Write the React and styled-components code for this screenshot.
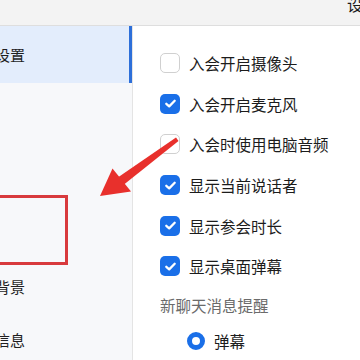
import React from 'react';
import styled, { createGlobalStyle } from 'styled-components';

const GlobalStyle = createGlobalStyle`
  html, body {
    margin: 0;
    padding: 0;
    background: #ffffff;
    overflow: hidden;
  }
  body {
    font-family: "Noto Sans CJK SC", "Noto Sans", sans-serif;
  }
`;

const Window = styled.div`
  position: relative;
  width: 360px;
  height: 360px;
  overflow: hidden;
  display: flex;
  flex-direction: column;
  background: #fff;
`;

const TitleBar = styled.div`
  height: 25px;
  flex: none;
  display: flex;
  justify-content: flex-end;
  align-items: flex-start;
  background: #f3f3f3;
  border-bottom: 1px solid #dedede;
`;

const Title = styled.span`
  margin-top: -6px;
  margin-right: -19px;
  font-size: 16px;
  line-height: 20px;
  color: #1a1a1a;
  white-space: nowrap;
`;

const Body = styled.div`
  flex: 1;
  display: flex;
  min-height: 0;
`;

const Sidebar = styled.div`
  width: 132px;
  flex: none;
  display: flex;
  flex-direction: column;
  background: #f7f8fa;
  border-right: 1px solid #e4e4e4;
`;

const NavItem = styled.div`
  height: ${p => p.$h || 53}px;
  flex: none;
  display: flex;
  align-items: center;
  background: ${p => (p.$active ? '#e3edfc' : 'transparent')};
  box-shadow: ${p => (p.$active ? 'inset -3px 0 0 #2d6fd9' : 'none')};
  overflow: hidden;
`;

const NavLabel = styled.span`
  margin-left: -35px;
  font-size: 15px;
  color: #1f1f1f;
  white-space: nowrap;
`;

const Spacer = styled.div`
  height: ${p => p.$h}px;
  flex: none;
`;

const Content = styled.div`
  flex: 1;
  display: flex;
  flex-direction: column;
  padding: 17px 0 0 27px;
`;

const Row = styled.label`
  height: 40.6px;
  flex: none;
  display: flex;
  align-items: center;
  gap: 9px;
  font-size: 15.5px;
  color: #1c1c1c;
  white-space: nowrap;
`;

const Box = styled.span`
  width: 20px;
  height: 20px;
  box-sizing: border-box;
  border-radius: 5px;
  flex: none;
  display: flex;
  align-items: center;
  justify-content: center;
  background: ${p => (p.$checked ? '#1a6fe8' : '#fff')};
  border: ${p => (p.$checked ? 'none' : '1.5px solid #d0d0d0')};
`;

const SectionLabel = styled.div`
  margin-top: 6px;
  height: 24px;
  line-height: 24px;
  font-size: 15.5px;
  color: #6b6b6b;
  white-space: nowrap;
`;

const RadioRow = styled(Row)`
  margin-top: 4px;
  padding-left: 27px;
`;

const Radio = styled.span`
  width: 18px;
  height: 18px;
  box-sizing: border-box;
  border-radius: 50%;
  border: 5px solid #1a6fe8;
  background: #fff;
  flex: none;
`;

const MarkBox = styled.div`
  position: absolute;
  left: -10px;
  top: 195px;
  width: 72px;
  height: 64px;
  border: 3px solid #d83a3d;
`;

const ArrowSvg = styled.svg`
  position: absolute;
  left: 0;
  top: 0;
  pointer-events: none;
`;

const Check = () => (
  <svg width="13" height="13" viewBox="0 0 13 13">
    <path d="M2.3 6.8 L5.2 9.4 L10.7 3.8" fill="none" stroke="#fff" strokeWidth="2.3" strokeLinecap="round" strokeLinejoin="round" />
  </svg>
);

const options = [
  { text: '入会开启摄像头', checked: false },
  { text: '入会开启麦克风', checked: true },
  { text: '入会时使用电脑音频', checked: false },
  { text: '显示当前说话者', checked: true },
  { text: '显示参会时长', checked: true },
  { text: '显示桌面弹幕', checked: true },
];

export default function App() {
  return (
    <>
      <GlobalStyle />
      <Window>
        <TitleBar>
          <Title>设置</Title>
        </TitleBar>
        <Body>
          <Sidebar>
            <NavItem $active $h={57}>
              <NavLabel>常规设置</NavLabel>
            </NavItem>
            <Spacer $h={177} />
            <NavItem>
              <NavLabel>虚拟背景</NavLabel>
            </NavItem>
            <NavItem>
              <NavLabel>个人信息</NavLabel>
            </NavItem>
          </Sidebar>
          <Content>
            {options.map(o => (
              <Row key={o.text}>
                <Box $checked={o.checked}>{o.checked && <Check />}</Box>
                {o.text}
              </Row>
            ))}
            <SectionLabel>新聊天消息提醒</SectionLabel>
            <RadioRow>
              <Radio />
              弹幕
            </RadioRow>
          </Content>
        </Body>
        <MarkBox />
        <ArrowSvg width="360" height="360" viewBox="0 0 360 360">
          <polygon points="176,137.5 178.5,141 124,184.5 118.5,177" fill="#e8302c" />
          <polygon points="100,196 112.5,168.5 131,191.5" fill="#e8302c" />
        </ArrowSvg>
      </Window>
    </>
  );
}
